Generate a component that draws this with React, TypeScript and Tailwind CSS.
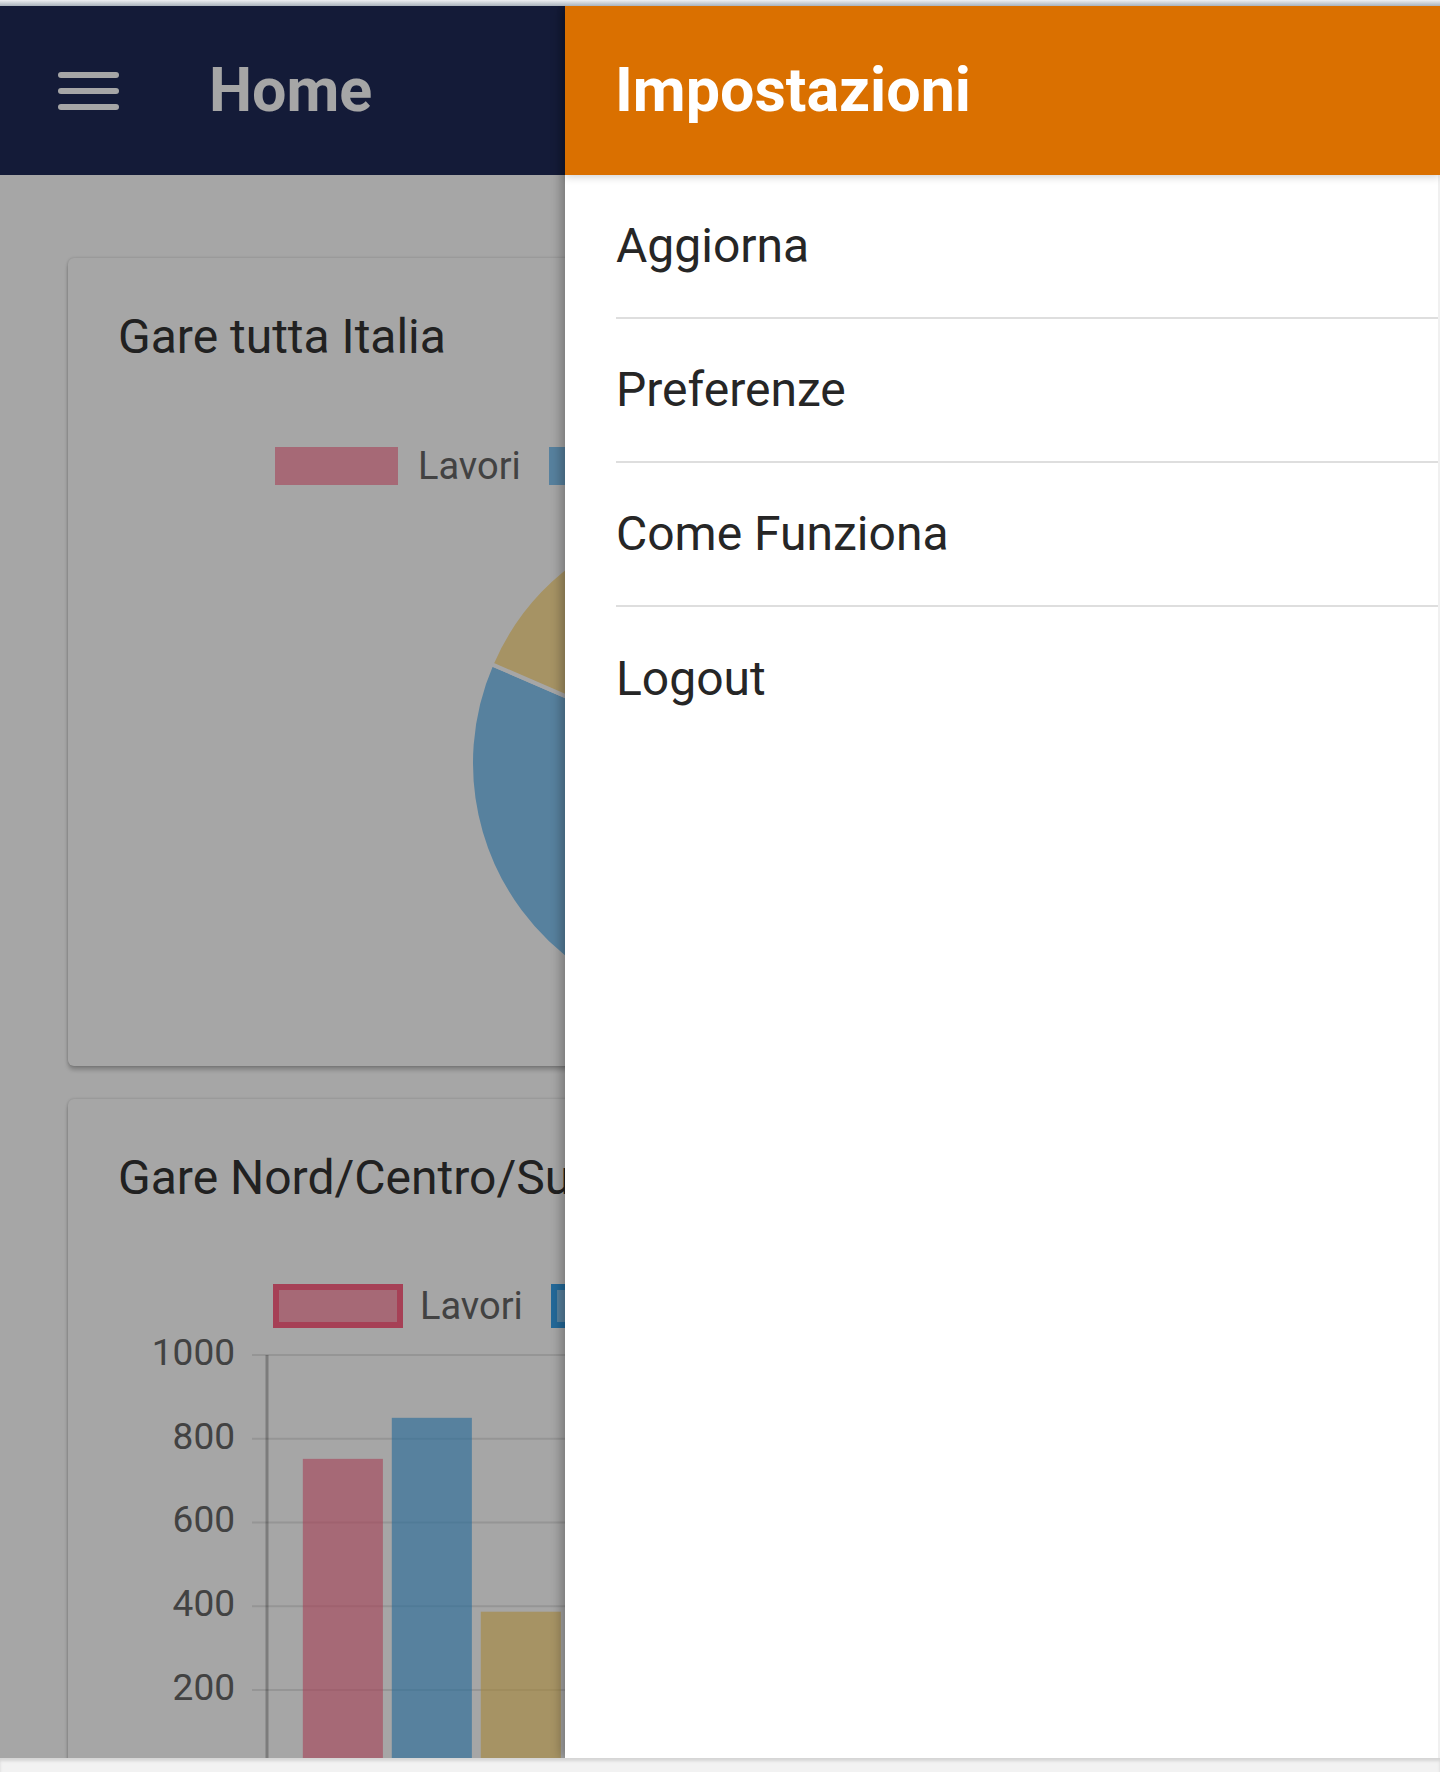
import React from "react";

const MENU_ITEMS = ["Aggiorna", "Preferenze", "Come Funziona", "Logout"];

const PIE_SLICES = [
  { label: "Lavori", value: 0.375, color: "#ff6384" },
  { label: "Servizi", value: 0.44, color: "#36a2eb" },
  { label: "Forniture", value: 0.185, color: "#ffce56" },
];

const BAR_DATA = [
  { label: "Lavori", color: "#ff6384", values: [752, 610, 540] },
  { label: "Servizi", color: "#36a2eb", values: [850, 700, 620] },
  { label: "Forniture", color: "#ffce56", values: [387, 330, 280] },
];

const TICKS = [1000, 800, 600, 400, 200, 0];

function point(cx: number, cy: number, r: number, deg: number) {
  const a = (deg * Math.PI) / 180;
  return [cx + r * Math.sin(a), cy - r * Math.cos(a)];
}

function slicePath(cx: number, cy: number, r: number, a0: number, a1: number) {
  const [x0, y0] = point(cx, cy, r, a0);
  const [x1, y1] = point(cx, cy, r, a1);
  const large = a1 - a0 > 180 ? 1 : 0;
  return `M ${cx} ${cy} L ${x0} ${y0} A ${r} ${r} 0 ${large} 1 ${x1} ${y1} Z`;
}

function PieChart() {
  const cx = 602;
  const cy = 249;
  const r = 249;
  let start = 0;
  return (
    <svg width="1204" height="498" className="block">
      {PIE_SLICES.map((s) => {
        const end = start + s.value * 360;
        const d = slicePath(cx, cy, r, start, end);
        start = end;
        return <path key={s.label} d={d} fill={s.color} fillOpacity={0.6} stroke="#ffffff" strokeWidth={4} />;
      })}
    </svg>
  );
}

function BarChart() {
  const top = 29;
  const perUnit = 83.75 / 200;
  const y = (v: number) => top + (1000 - v) * perUnit;
  const axisX = 149;
  const right = 1150;
  const catW = (right - axisX) / 3;
  const slot = (catW * 0.8) / 3;
  const barW = slot * 0.9;

  return (
    <svg width="1204" height="520" className="block">
      {TICKS.map((t) => (
        <g key={t}>
          <line x1={134} x2={right} y1={y(t)} y2={y(t)} stroke="rgba(0,0,0,0.1)" strokeWidth={2} />
          <text x={117} y={y(t)} textAnchor="end" dominantBaseline="middle" fontSize={37} fill="#666666" fontFamily="Roboto, sans-serif">
            {t}
          </text>
        </g>
      ))}
      <line x1={axisX} x2={axisX} y1={top} y2={y(0)} stroke="rgba(0,0,0,0.25)" strokeWidth={3} />
      {[0, 1, 2].map((ci) =>
        BAR_DATA.map((ds, di) => {
          const x = axisX + ci * catW + catW * 0.1 + di * slot + slot * 0.05 - 2;
          const v = ds.values[ci];
          return (
            <rect key={`${ci}-${di}`} x={x} y={y(v)} width={barW} height={y(0) - y(v)} fill={ds.color} fillOpacity={0.6} />
          );
        })
      )}
    </svg>
  );
}

function Legend({ outlined }: { outlined?: boolean }) {
  return (
    <div className={`flex items-center h-[40px] ${outlined ? "pl-[155px]" : "pl-[157px]"}`}>
      {BAR_DATA.map((ds, i) => (
        <div key={ds.label} className="flex items-center mr-[28px]">
          {outlined ? (
            <span
              className={`block w-[130px] h-[44px] border-[6px] ${
                i === 0 ? "border-[#ff6384] bg-[#ff6384]/60" : i === 1 ? "border-[#36a2eb] bg-[#36a2eb]/60" : "border-[#ffce56] bg-[#ffce56]/60"
              }`}
            />
          ) : (
            <span
              className={`block w-[123px] h-[38px] ${
                i === 0 ? "bg-[#ff6384]/60" : i === 1 ? "bg-[#36a2eb]/60" : "bg-[#ffce56]/60"
              }`}
            />
          )}
          <span className={`text-[38px] leading-none text-[#666666] ${outlined ? "ml-[17px]" : "ml-[20px]"}`}>{ds.label}</span>
        </div>
      ))}
    </div>
  );
}

function Card({ title, children, className }: { title: string; children: React.ReactNode; className?: string }) {
  return (
    <div
      className={`ml-[68px] w-[1304px] bg-white rounded-[6px] shadow-[0_4px_4px_rgba(0,0,0,0.22),0_0_3px_rgba(0,0,0,0.2)] pt-[50px] px-[50px] ${className ?? ""}`}
    >
      <h2 className="text-[48px] leading-[1.2] text-[#333333] font-normal">{title}</h2>
      {children}
    </div>
  );
}

export default function App() {
  return (
    <div className="w-[1440px] h-[1772px] bg-[#f2f2f2] flex flex-col overflow-hidden font-['Roboto',sans-serif]">
      {/* window top edge */}
      <div className="h-[6px] shrink-0 bg-gradient-to-b from-[#eef0f2] to-[#aab3bc]" />

      <div className="relative h-[1752px] shrink-0 overflow-hidden bg-white">
        {/* page */}
        <div className="flex flex-col">
          <header className="h-[169px] bg-[#1f2a56] flex items-center pl-[58px]">
            <div className="flex flex-col gap-[10px]">
              <span className="block w-[61px] h-[6px] rounded-full bg-white" />
              <span className="block w-[61px] h-[6px] rounded-full bg-white" />
              <span className="block w-[61px] h-[6px] rounded-full bg-white" />
            </div>
            <h1 className="ml-[90px] text-[61px] font-bold text-white leading-none">Home</h1>
          </header>

          <main className="pt-[83px] flex flex-col gap-[33px]">
            <Card title="Gare tutta Italia" className="pb-[54px]">
              <div className="mt-[80px]">
                <Legend />
              </div>
              <div className="mt-[28px]">
                <PieChart />
              </div>
            </Card>
            <Card title="Gare Nord/Centro/Sud" className="h-[900px]">
              <div className="mt-[80px]">
                <Legend outlined />
              </div>
              <BarChart />
            </Card>
          </main>
        </div>

        {/* backdrop */}
        <div className="absolute inset-0 bg-black/35" />

        {/* side menu */}
        <aside className="absolute top-0 bottom-0 left-[565px] right-0 bg-white flex flex-col shadow-[-4px_0_10px_rgba(0,0,0,0.28)]">
          <div className="relative z-10 h-[169px] shrink-0 bg-[#da7000] flex items-center pl-[50px] shadow-[0_2px_8px_rgba(0,0,0,0.18)]">
            <h1 className="text-[61px] font-bold text-white leading-none">Impostazioni</h1>
          </div>
          <nav className="flex-1 pl-[51px] border-r-2 border-[#f0f0f0]">
            {MENU_ITEMS.map((item, i) => (
              <div
                key={item}
                className={`h-[144px] flex items-center text-[48px] text-[#262626] ${
                  i < MENU_ITEMS.length - 1 ? "border-b-2 border-[#dedede]" : ""
                }`}
              >
                {item}
              </div>
            ))}
          </nav>
        </aside>
      </div>

      {/* window bottom edge */}
      <div className="flex-1 bg-[#f2f2f2] shadow-[inset_0_3px_3px_rgba(0,0,0,0.12)]" />
    </div>
  );
}
